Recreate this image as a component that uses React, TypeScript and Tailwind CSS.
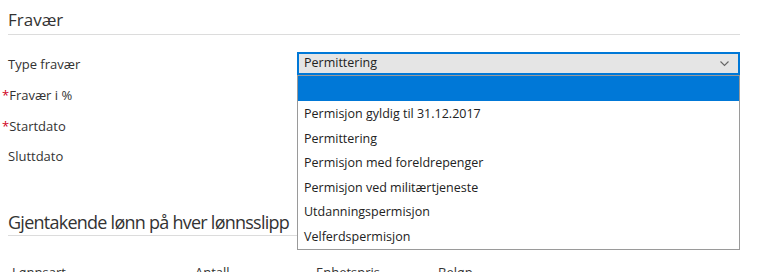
// Fravær form with open leave-type dropdown

const leaveTypes = [
  "",
  "Permisjon gyldig til 31.12.2017",
  "Permittering",
  "Permisjon med foreldrepenger",
  "Permisjon ved militærtjeneste",
  "Utdanningspermisjon",
  "Velferdspermisjon",
];

function Label({ text, required }: { text: string; required?: boolean }) {
  return (
    <div className="w-[289px] shrink-0 text-[13px] leading-[18px] text-[#333]">
      {required && <span className="-ml-[6px] text-[#d0021b]">*</span>}
      {text}
    </div>
  );
}

function TextInput() {
  return <div className="h-[23px] flex-1 border border-[#c8c8c8] bg-white" />;
}

export default function App() {
  return (
    <div
      className="w-[758px] h-[272px] overflow-hidden bg-white pl-2 text-[#222]"
      style={{ fontFamily: '"Open Sans", "Liberation Sans", sans-serif' }}
    >
      <div className="w-[732px]">
        <h3 className="pt-[9px] pb-[3px] text-[17px] leading-[22px] text-[#333] border-b border-[#dcdcdc]">
          Fravær
        </h3>

        <div className="mt-[17px] flex items-center">
          <Label text="Type fravær" />
          <div className="relative flex-1">
            <div className="flex h-[23px] items-center justify-between border-2 border-[#0078d7] bg-[#e5e5e5] pl-[5px] pr-[9px] text-[12.5px]">
              <span>Permittering</span>
              <svg width="9" height="6" viewBox="0 0 9 6" fill="none">
                <path d="M0.5 0.5 L4.5 4.5 L8.5 0.5" stroke="#666" strokeWidth="1.1" />
              </svg>
            </div>
            <ul className="absolute left-0 top-full z-10 w-[443px] border border-[#9a9a9a] bg-white text-[12.5px]">
              {leaveTypes.map((t, i) => (
                <li
                  key={i}
                  className={
                    i === 0
                      ? "h-[25px] bg-[#0078d7]"
                      : "flex h-[24.6px] items-center pl-[6px] pt-[2px] text-[#222]"
                  }
                >
                  {t}
                </li>
              ))}
            </ul>
          </div>
        </div>

        <div className="mt-[8px] flex items-center">
          <Label text="Fravær i %" required />
          <TextInput />
        </div>
        <div className="mt-[8px] flex items-center">
          <Label text="Startdato" required />
          <TextInput />
        </div>
        <div className="mt-[7px] flex items-center">
          <Label text="Sluttdato" />
          <TextInput />
        </div>

        <h3 className="mt-[43px] pb-[1px] text-[18px] leading-[24px] tracking-[-0.75px] text-[#333] border-b border-[#dcdcdc]">
          Gjentakende lønn på hver lønnsslipp
        </h3>

        <div className="mt-[27px] flex text-[13px] leading-[18px] text-[#333]">
          <div className="w-[187px] pl-1">Lønnsart</div>
          <div className="w-[121px]">Antall</div>
          <div className="w-[122px]">Enhetspris</div>
          <div>Beløp</div>
        </div>
      </div>
    </div>
  );
}
